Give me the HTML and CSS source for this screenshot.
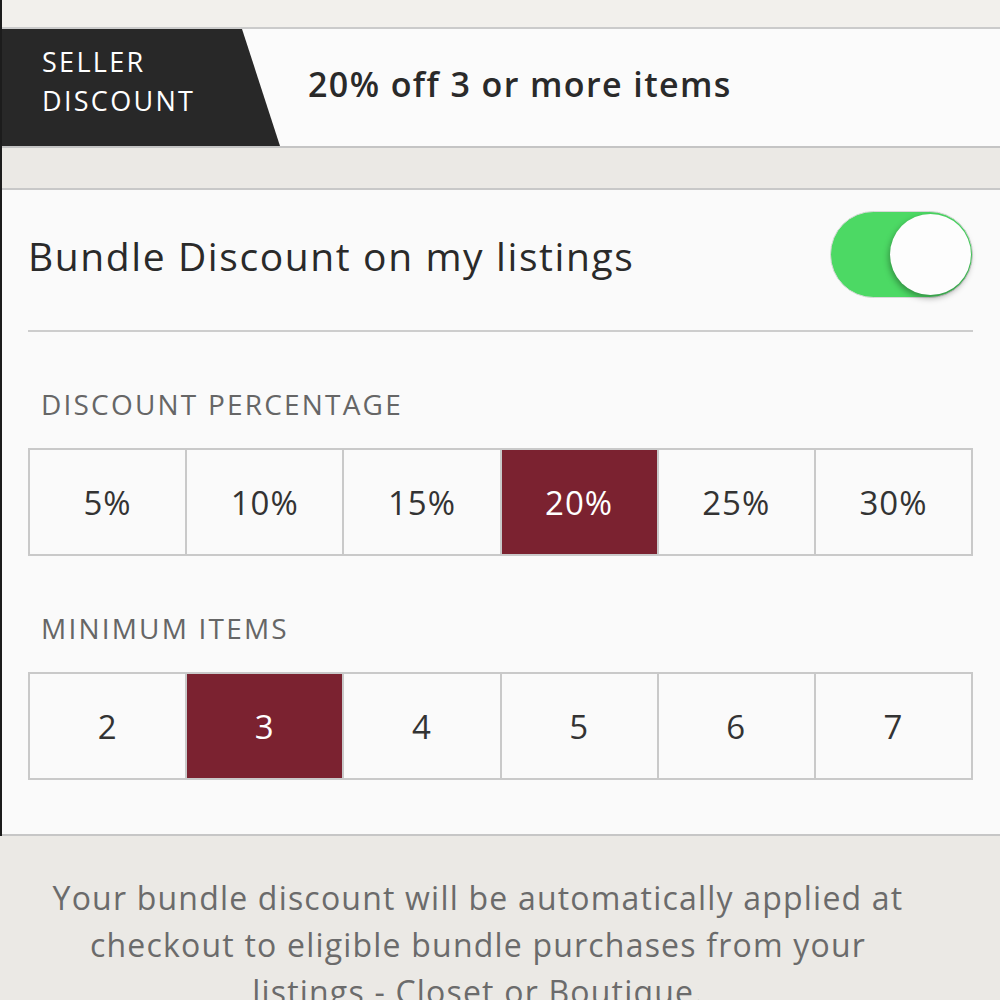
FILE: index.html
```html
<html>

<head>
    <meta charset="UTF-8">
    <meta name="viewport" content="width=device-width, initial-scale=1.0">
    <link rel="stylesheet" href="styles.css">
</head>

<body>
    <div class="page">
        <div class="topbar"></div>
        <div class="banner">
            <div class="tag">SELLER<br>DISCOUNT</div>
            <div class="summary">20% off 3 or more items</div>
        </div>
        <div class="band"></div>
        <div class="card">
            <div class="switch-row">
                <div class="switch-label">Bundle Discount on my listings</div>
                <div class="toggle on"><span class="knob"></span></div>
            </div>
            <div class="divider"></div>
            <div class="section-label">DISCOUNT PERCENTAGE</div>
            <ul class="segments">
                <li>5%</li>
                <li>10%</li>
                <li>15%</li>
                <li class="active">20%</li>
                <li>25%</li>
                <li>30%</li>
            </ul>
            <div class="section-label">MINIMUM ITEMS</div>
            <ul class="segments">
                <li>2</li>
                <li class="active">3</li>
                <li>4</li>
                <li>5</li>
                <li>6</li>
                <li>7</li>
            </ul>
        </div>
    </div>
    <p class="note">
        Your bundle discount will be automatically applied at<br>
        checkout to eligible bundle purchases from your<br>
        listings - Closet or Boutique.
    </p>
</body>

</html>
```

FILE: styles.css
```css
body {
    margin: 0;
    font-family: 'Open Sans', 'Liberation Sans', sans-serif;
    background-color: #ebe9e5;
    overflow: hidden;
}

.page {
    border-left: 2px solid #1c1c1c;
}

.topbar {
    height: 27px;
    background-color: #f2f0ec;
    border-bottom: 2px solid #cbcbcb;
}

.banner {
    display: flex;
    align-items: center;
    height: 117px;
    background-color: #fbfbfb;
    border-bottom: 2px solid #c4c4c4;
}

.tag {
    height: 100%;
    padding: 0 0 14px 40px;
    box-sizing: border-box;
    display: flex;
    align-items: center;
    flex: none;
    width: 278px;
    background-color: #282828;
    clip-path: polygon(0 0, 240px 0, 278px 100%, 0 100%);
    color: #fff;
    font-size: 27px;
    line-height: 39px;
    letter-spacing: 2.3px;
}

.summary {
    margin: 0 0 8px 28px;
    font-size: 34px;
    font-weight: 600;
    letter-spacing: 1.4px;
    color: #2a2a2a;
}

.band {
    height: 40px;
    background-color: #ebe9e5;
    border-bottom: 2px solid #c8c8c8;
}

.card {
    padding: 0 27px 54px 26px;
    background-color: #fafafa;
    border-bottom: 2px solid #c6c6c6;
}

.switch-row {
    display: flex;
    align-items: center;
    justify-content: space-between;
    height: 128px;
    margin-bottom: 12px;
}

.switch-label {
    font-size: 39px;
    letter-spacing: 1.6px;
    color: #2a2a2a;
    padding-top: 2px;
}

.toggle {
    display: flex;
    justify-content: flex-end;
    align-items: center;
    width: 143px;
    height: 87px;
    padding: 0 1px;
    box-sizing: border-box;
    border: 1px solid #d9d9d9;
    border-radius: 44px;
    background-color: #4cd964;
}

.knob {
    width: 81px;
    height: 81px;
    border-radius: 50%;
    background-color: #fdfdfd;
    box-shadow: -1px 3px 6px rgba(0, 0, 0, 0.35);
}

.divider {
    height: 2px;
    background-color: #cdcdcd;
}

.section-label {
    padding: 56px 0 28px 13px;
    font-size: 28px;
    line-height: 32px;
    letter-spacing: 2.2px;
    color: #666;
}

.segments {
    display: grid;
    grid-template-columns: repeat(6, 1fr);
    margin: 0;
    padding: 0;
    list-style: none;
    border: 2px solid #c9c9c9;
    border-right: none;
}

.segments li {
    height: 104px;
    display: flex;
    align-items: center;
    justify-content: center;
    border-right: 2px solid #c9c9c9;
    font-size: 33px;
    letter-spacing: 1px;
    color: #333;
}

.segments li.active {
    background-color: #7b2230;
    color: #fff;
}

.note {
    margin: 0;
    padding: 38px 44px 0 0;
    text-align: center;
    font-size: 32px;
    line-height: 47px;
    letter-spacing: 1.2px;
    color: #6b6b6b;
}
```
